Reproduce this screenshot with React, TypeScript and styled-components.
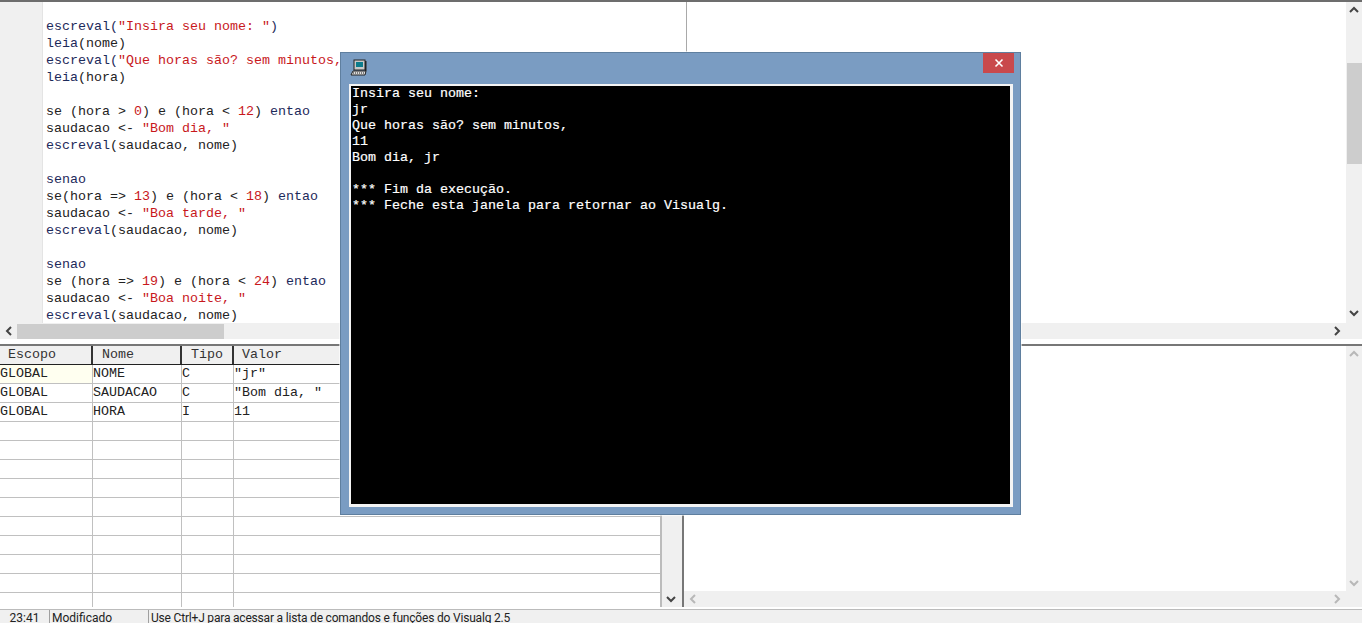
import React from "react";
import styled, { createGlobalStyle } from "styled-components";

const Global = createGlobalStyle`
  html, body { margin: 0; padding: 0; background: #fff; overflow: hidden; }
  * { box-sizing: border-box; }
`;
const mono = `"Liberation Mono", "Courier New", monospace`;

const Page = styled.div`
  position: relative; width: 1362px; height: 623px; overflow: hidden; background: #fff;
  display: flex; flex-direction: column; font-family: ${mono}; font-size: 13.33px;
`;
const TopSplit = styled.section`
  height: 346px; flex: none; display: flex; flex-direction: column;
  border-top: 2px solid #6d6d6d; border-bottom: 2px solid #777;
`;
const TopPanes = styled.div`flex: 1; min-height: 0; display: flex;`;
const EditorPane = styled.div`
  width: 687px; flex: none; display: flex; border-right: 1px solid #a9a9a9;
`;
const Gutter = styled.div`width: 43px; flex: none; background: #f0f0f0; border-right: 1px solid #e4e4e4;`;
const Code = styled.pre`
  margin: 0; padding: 16px 0 0 3px; font: inherit; line-height: 17px; color: #1d2a5a; flex: 1; white-space: pre;
`;
const Str = styled.span`color: #c8181c;`;
const Plain = styled.span`color: #222;`;
const BlankPane = styled.div`flex: 1;`;
const VBar = styled.div`
  width: 16px; flex: none; background: #f0f0f0; display: flex; flex-direction: column; align-items: center; position: relative;
`;
const VSpacer = styled.div<{ $h: number }>`height: ${p => p.$h}px; flex: none;`;
const HSpacer = styled.div<{ $w: number }>`width: ${p => p.$w}px; flex: none;`;
const VThumb = styled.div<{ $h: number }>`width: 15px; height: ${p => p.$h}px; flex: none; background: #cdcdcd;`;
const Fill = styled.div`flex: 1;`;
const HBar = styled.div`
  height: 16px; flex: none; background: #f0f0f0; display: flex; align-items: center; position: relative;
`;
const HThumb = styled.div`width: 207px; height: 15px; background: #cdcdcd; flex: none;`;
const Gap = styled.div`height: 5px; flex: none; background: #fff;`;
const ArrowBox = styled.div`width: 17px; height: 16px; flex: none; display: flex; align-items: center; justify-content: center;`;

const BottomSplit = styled.section`flex: 1; min-height: 0; display: flex;`;
const VarPane = styled.div`width: 660px; flex: none; display: flex; flex-direction: column; overflow: hidden;`;
const TableHead = styled.div`
  height: 19px; flex: none; display: grid; grid-template-columns: 93px 89px 52px 1fr;
  background: #f0f0f0; border-bottom: 1px solid #222; color: #333;
`;
const HeadCell = styled.div<{ $pad: number }>`
  padding-left: ${p => p.$pad}px; line-height: 18px; border-right: 2px solid #333;
  &:last-child { border-right: 0; }
`;
const Row = styled.div`
  height: 19px; flex: none; display: grid; grid-template-columns: 93px 89px 52px 1fr;
  border-bottom: 1px solid #c0c0c0; color: #222;
`;
const Cell = styled.div<{ $hi?: boolean }>`
  line-height: 18px; white-space: pre; overflow: hidden; border-right: 1px solid #c0c0c0;
  background: ${p => (p.$hi ? "#fffff0" : "transparent")};
  &:last-child { border-right: 0; }
`;
const TableScroll = styled.div`
  width: 24px; flex: none; background: #f0f0f0; display: flex; flex-direction: column; align-items: center;
  border-left: 2px solid #bcbcbc; border-right: 2px solid #777; padding-right: 2px;
`;
const OutputPane = styled.div`flex: 1; min-width: 0; display: flex; flex-direction: column;`;
const OutputBody = styled.div`flex: 1; min-height: 0; display: flex; justify-content: flex-end;`;
const StatusBar = styled.footer`
  height: 14px; flex: none; margin-top: 2px; background: #f0f0f0; border-top: 1px solid #bbb;
  display: flex; gap: 2px; font-family: Roboto, "Liberation Sans", sans-serif; font-size: 12px; color: #222;
  overflow: hidden;
`;
const StatusCell = styled.div<{ $w?: number; $center?: boolean; $tight?: boolean }>`
  ${p => (p.$w ? `width: ${p.$w}px; flex: none;` : "flex: 1;")}
  padding-left: 2px; line-height: 17px; white-space: nowrap; text-align: ${p => (p.$center ? "center" : "left")};
  letter-spacing: ${p => (p.$tight ? "-0.19px" : "normal")};
  border-left: 1px solid #a0a0a0;
  &:first-child { border-left: 0; }
`;

const Win = styled.div`
  position: absolute; left: 340px; top: 52px; width: 681px; height: 463px;
  background: #7a9cc2; border: 1px solid #5f7f9f; box-shadow: 0 0 0 1px rgba(255,255,255,.6);
`;
const TitleBar = styled.div`height: 31px; display: flex; justify-content: space-between; padding: 0 6px 0 9px;`;
const AppIcon = styled.svg`width: 18px; height: 18px; margin-top: 6px;`;
const Close = styled.div`
  width: 31px; height: 20px; background: #c9494c; color: #fff; display: flex; align-items: center; justify-content: center;
`;
const Console = styled.pre`
  margin: 0 0 0 8px; width: 664px; height: 423px; background: #000; color: #fff; border: 2px solid #f4f4f4;
  border-right-width: 3px; border-bottom-width: 3px; padding: 0 0 0 1px; font: inherit; font-weight: 400;
  line-height: 16px; -webkit-text-stroke: 0.2px #fff;
`;

const Chevron = ({ d, color = "#444" }: { d: "up" | "down" | "left" | "right"; color?: string }) => {
  const pts = { up: "1,7 5,3 9,7", down: "1,3 5,7 9,3", left: "7,1 3,5 7,9", right: "3,1 7,5 3,9" }[d];
  return (
    <svg width="10" height="10" viewBox="0 0 10 10">
      <polyline points={pts} fill="none" stroke={color} strokeWidth="2" />
    </svg>
  );
};

const rows: [string, string, string, string][] = [
  ["GLOBAL", "NOME", "C", '"jr"'],
  ["GLOBAL", "SAUDACAO", "C", '"Bom dia, "'],
  ["GLOBAL", "HORA", "I", "11"],
  ...Array.from({ length: 10 }, () => ["", "", "", ""] as [string, string, string, string]),
];

export default function App() {
  return (
    <Page>
      <Global />
      <TopSplit>
        <TopPanes>
          <EditorPane>
            <Gutter />
            <Code>
              escreval(<Str>"Insira seu nome: "</Str>){"\n"}
              leia<Plain>(nome)</Plain>{"\n"}
              escreval(<Str>"Que horas são? sem minutos, "</Str>){"\n"}
              leia<Plain>(hora)</Plain>{"\n\n"}
              <Plain>se (hora &gt; </Plain><Str>0</Str><Plain>) e (hora &lt; </Plain><Str>12</Str><Plain>) </Plain>entao{"\n"}
              <Plain>saudacao &lt;- </Plain><Str>"Bom dia, "</Str>{"\n"}
              escreval<Plain>(saudacao, nome)</Plain>{"\n\n"}
              senao{"\n"}
              <Plain>se(hora =&gt; </Plain><Str>13</Str><Plain>) e (hora &lt; </Plain><Str>18</Str><Plain>) </Plain>entao{"\n"}
              <Plain>saudacao &lt;- </Plain><Str>"Boa tarde, "</Str>{"\n"}
              escreval<Plain>(saudacao, nome)</Plain>{"\n\n"}
              senao{"\n"}
              <Plain>se (hora =&gt; </Plain><Str>19</Str><Plain>) e (hora &lt; </Plain><Str>24</Str><Plain>) </Plain>entao{"\n"}
              <Plain>saudacao &lt;- </Plain><Str>"Boa noite, "</Str>{"\n"}
              escreval<Plain>(saudacao, nome)</Plain>
            </Code>
          </EditorPane>
          <BlankPane />
          <VBar>
            <ArrowBox><Chevron d="up" /></ArrowBox>
            <VSpacer $h={45} />
            <VThumb $h={101} />
            <Fill />
            <ArrowBox><Chevron d="down" /></ArrowBox>
            <VSpacer $h={2} />
          </VBar>
        </TopPanes>
        <HBar>
          <ArrowBox><Chevron d="left" /></ArrowBox>
          <HThumb />
          <Fill />
          <ArrowBox><Chevron d="right" /></ArrowBox>
          <HSpacer $w={17} />
        </HBar>
        <Gap />
      </TopSplit>
      <BottomSplit>
        <VarPane>
          <TableHead>
            <HeadCell $pad={8}>Escopo</HeadCell>
            <HeadCell $pad={9}>Nome</HeadCell>
            <HeadCell $pad={9}>Tipo</HeadCell>
            <HeadCell $pad={8}>Valor</HeadCell>
          </TableHead>
          {rows.map((r, i) => (
            <Row key={i}>
              <Cell $hi={i === 0}>{r[0]}</Cell>
              <Cell>{r[1]}</Cell>
              <Cell>{r[2]}</Cell>
              <Cell>{r[3]}</Cell>
            </Row>
          ))}
        </VarPane>
        <TableScroll>
          <Fill />
          <ArrowBox><Chevron d="down" /></ArrowBox>
        </TableScroll>
        <OutputPane>
          <OutputBody>
            <VBar>
              <ArrowBox><Chevron d="up" color="#b8b8b8" /></ArrowBox>
              <Fill />
              <ArrowBox><Chevron d="down" color="#b8b8b8" /></ArrowBox>
            </VBar>
          </OutputBody>
          <HBar>
            <ArrowBox><Chevron d="left" color="#b8b8b8" /></ArrowBox>
            <Fill />
            <ArrowBox><Chevron d="right" color="#b8b8b8" /></ArrowBox>
            <HSpacer $w={17} />
          </HBar>
        </OutputPane>
      </BottomSplit>
      <StatusBar>
        <StatusCell $w={47} $center>23:41</StatusCell>
        <StatusCell $w={97}>Modificado</StatusCell>
        <StatusCell $tight>Use Ctrl+J para acessar a lista de comandos e funções do Visualg 2.5</StatusCell>
      </StatusBar>
      <Win>
        <TitleBar>
          <AppIcon viewBox="0 0 18 18">
            <rect x="4" y="1" width="11" height="10" fill="#c8c8c8" stroke="#222" />
            <rect x="6" y="3" width="7" height="5" fill="#0c7c8c" />
            <rect x="15" y="2" width="1.5" height="10" fill="#222" />
            <polygon points="3,12 16,12 15,16 1,16" fill="#ddd" stroke="#222" />
            <line x1="3" y1="14" x2="14" y2="14" stroke="#222" strokeDasharray="1 1" />
          </AppIcon>
          <Close>
            <svg width="10" height="10" viewBox="0 0 10 10">
              <path d="M1.5 1.5 L8.5 8.5 M8.5 1.5 L1.5 8.5" stroke="#fff" strokeWidth="1.6" />
            </svg>
          </Close>
        </TitleBar>
        <Console>{`Insira seu nome:
jr
Que horas são? sem minutos,
11
Bom dia, jr

*** Fim da execução.
*** Feche esta janela para retornar ao Visualg.`}</Console>
      </Win>
    </Page>
  );
}
